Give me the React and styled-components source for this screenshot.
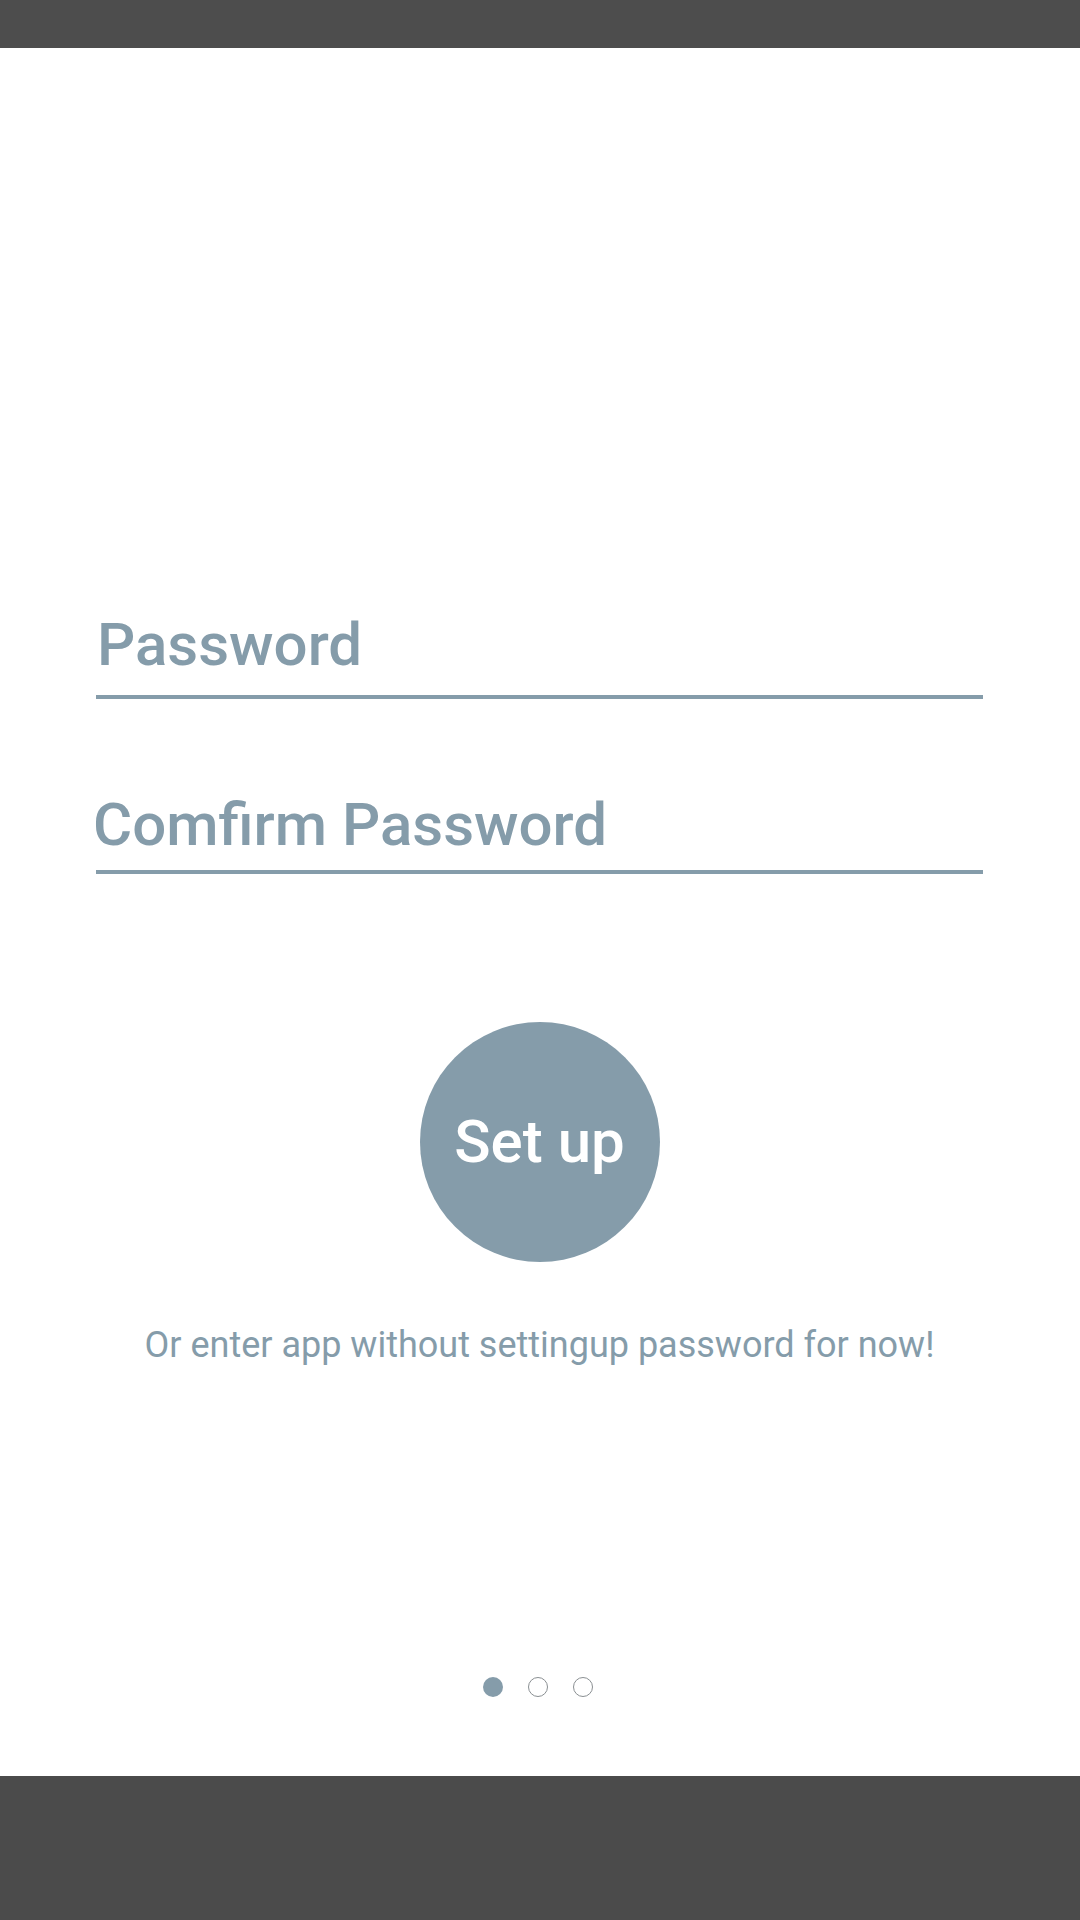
import React from 'react';
import styled, { createGlobalStyle } from 'styled-components';

const accent = '#859caa';

const GlobalStyle = createGlobalStyle`
  html, body {
    margin: 0;
    padding: 0;
    background: #ffffff;
  }
  body {
    font-family: Roboto, "Noto Sans", "Liberation Sans", sans-serif;
  }
`;

const Screen = styled.div`
  width: 1080px;
  height: 1920px;
  display: flex;
  flex-direction: column;
  background: #ffffff;
`;

const StatusBar = styled.div`
  height: 48px;
  flex-shrink: 0;
  background: #4d4d4d;
`;

const NavBar = styled.div`
  height: 144px;
  flex-shrink: 0;
  background: #4b4b4b;
`;

const Content = styled.div`
  flex: 1;
  display: flex;
  flex-direction: column;
  padding: 0 97px 0 96px;
`;

const Field = styled.div`
  margin-top: ${props => props.top}px;
  padding-bottom: ${props => props.gap}px;
  border-bottom: 4px solid ${accent};
`;

const Label = styled.div`
  margin-left: ${props => props.indent || 0}px;
  font-size: 60px;
  font-weight: 500;
  line-height: 72px;
  color: ${accent};
`;

const SetupButton = styled.button`
  align-self: center;
  margin-top: 148px;
  width: 240px;
  height: 240px;
  border: none;
  border-radius: 50%;
  background: ${accent};
  color: #ffffff;
  font-family: Roboto, "Liberation Sans", sans-serif;
  font-size: 60px;
  font-weight: 500;
  display: flex;
  align-items: center;
  justify-content: center;
  padding: 0 0 2px;
  cursor: pointer;
`;

const SkipText = styled.div`
  margin-top: 61px;
  text-align: center;
  font-size: 36px;
  line-height: 44px;
  color: ${accent};
`;

const Dots = styled.div`
  margin-top: 310px;
  display: flex;
  justify-content: center;
  gap: 25px;
  padding-right: 4px;
`;

const Dot = styled.span`
  width: 20px;
  height: 20px;
  box-sizing: border-box;
  border-radius: 50%;
  background: ${props => (props.active ? accent : 'transparent')};
  border: ${props => (props.active ? 'none' : '1.5px solid #8a8f92')};
`;

export default function App() {
  return (
    <>
      <GlobalStyle />
      <Screen>
        <StatusBar />
        <Content>
          <Field top={561} gap={14}>
            <Label indent={1}>Password</Label>
          </Field>
          <Field top={90} gap={9}>
            <Label indent={-3}>Comfirm Password</Label>
          </Field>
          <SetupButton>Set up</SetupButton>
          <SkipText>Or enter app without settingup password for now!</SkipText>
          <Dots>
            <Dot active />
            <Dot />
            <Dot />
          </Dots>
        </Content>
        <NavBar />
      </Screen>
    </>
  );
}
